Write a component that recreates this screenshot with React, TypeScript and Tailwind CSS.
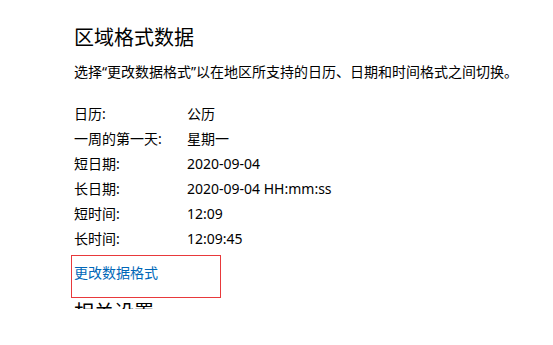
import React from "react";

const rows: [string, string][] = [
  ["日历:", "公历"],
  ["一周的第一天:", "星期一"],
  ["短日期:", "2020-09-04"],
  ["长日期:", "2020-09-04 HH:mm:ss"],
  ["短时间:", "12:09"],
  ["长时间:", "12:09:45"],
];

export default function App() {
  return (
    <div
      className="w-[553px] h-[345px] bg-white text-black overflow-hidden"
      style={{ fontFamily: '"Noto Sans", "Noto Sans CJK SC", sans-serif' }}
    >
      <div className="h-[309px] overflow-hidden pl-[74px] pt-[26px]">
        <div className="text-[20px] leading-[24px]">区域格式数据</div>
        <div className="mt-[12px] text-[14px] leading-[20px] whitespace-nowrap">
          选择“更改数据格式”以在地区所支持的日历、日期和时间格式之间切换。
        </div>
        <div className="mt-[19px] flex flex-col">
          {rows.map(([k, v]) => (
            <div key={k} className="flex h-[25px] items-center text-[14px] leading-[20px]">
              <div className="w-[113px]">{k}</div>
              <div>{v}</div>
            </div>
          ))}
        </div>
        <div className="mt-[4px] ml-[-3px] w-[150px] h-[43px] border border-[#e8393b] pl-[2px] pt-[7px]">
          <div className="text-[14px] leading-[20px] text-[#0067b8]">更改数据格式</div>
        </div>
        <div className="mt-[3px] text-[20px] leading-[24px]">相关设置</div>
      </div>
    </div>
  );
}
